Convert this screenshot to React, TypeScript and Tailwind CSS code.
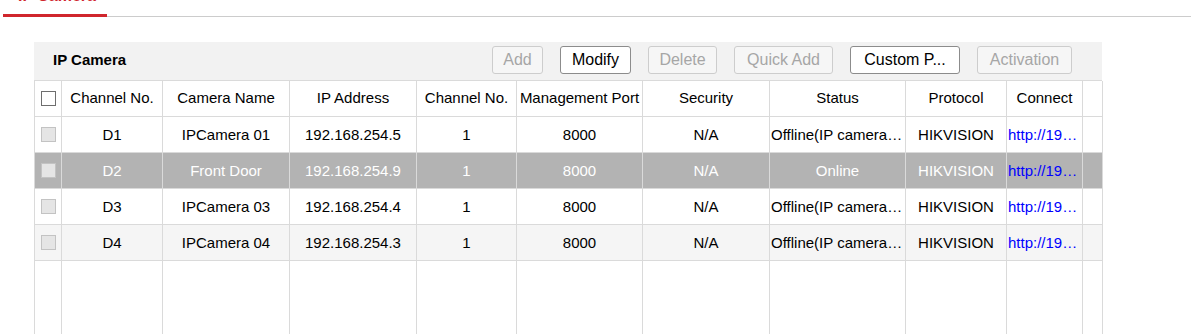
import { clsx } from 'clsx';

interface Camera {
    channel: string;
    name: string;
    ip: string;
    channelNo: string;
    port: string;
    security: string;
    status: string;
    protocol: string;
    connect: string;
}

const cameras: Camera[] = [
    { channel: 'D1', name: 'IPCamera 01', ip: '192.168.254.5', channelNo: '1', port: '8000', security: 'N/A', status: 'Offline(IP camera exception)', protocol: 'HIKVISION', connect: 'http://192.168.254.5' },
    { channel: 'D2', name: 'Front Door', ip: '192.168.254.9', channelNo: '1', port: '8000', security: 'N/A', status: 'Online', protocol: 'HIKVISION', connect: 'http://192.168.254.9' },
    { channel: 'D3', name: 'IPCamera 03', ip: '192.168.254.4', channelNo: '1', port: '8000', security: 'N/A', status: 'Offline(IP camera exception)', protocol: 'HIKVISION', connect: 'http://192.168.254.4' },
    { channel: 'D4', name: 'IPCamera 04', ip: '192.168.254.3', channelNo: '1', port: '8000', security: 'N/A', status: 'Offline(IP camera exception)', protocol: 'HIKVISION', connect: 'http://192.168.254.3' },
];

const buttons = [
    { label: 'Add', width: 'w-[51px]', enabled: false },
    { label: 'Modify', width: 'w-[71px]', enabled: true },
    { label: 'Delete', width: 'w-[69px]', enabled: false },
    { label: 'Quick Add', width: 'w-[99px]', enabled: false },
    { label: 'Custom P...', width: 'w-[110px]', enabled: true },
    { label: 'Activation', width: 'w-[95px]', enabled: false },
];

const headers = ['Channel No.', 'Camera Name', 'IP Address', 'Channel No.', 'Management Port', 'Security', 'Status', 'Protocol', 'Connect'];

// column widths include the right border line
const gridCols = 'grid grid-cols-[27px_101px_127px_127px_100px_126px_127px_136px_101px_76px_20px]';
const cell = 'h-[36px] border-r border-b border-[#dadada] flex items-center justify-center px-px min-w-0 overflow-hidden';
const text = 'block w-full text-center truncate';

export default function App() {
    return (
        <div className="w-[1191px] h-[334px] overflow-hidden bg-white text-[15px] text-black font-['Liberation_Sans',Arial,sans-serif]">
            {/* Tab bar */}
            <div className="ml-[3px] h-[17px] flex border-b border-[#cccccc]">
                <div className="w-[104px] h-[17px] border-b-[3px] border-[#d0262d] pl-[15px]">
                    <div className="-mt-[12px] leading-4 text-[16px] font-bold text-[#d0262d]">IP Camera</div>
                </div>
            </div>

            {/* Panel */}
            <div className="ml-[34px] mt-[25px] w-[1068px]">
                <div className="h-[38px] bg-[#f2f2f2] flex items-center pb-[2px] pl-[19px] pr-[30px]">
                    <span className="font-bold">IP Camera</span>
                    <div className="ml-auto flex gap-[17px]">
                        {buttons.map(b => (
                            <button
                                key={b.label}
                                className={clsx(
                                    'h-[28px] rounded-[3px] border text-center text-[16px] leading-none',
                                    b.width,
                                    b.enabled ? 'border-[#8c8c8c] bg-white text-black' : 'border-[#cdcdcd] bg-[#f6f6f6] text-[#a6a6a6]'
                                )}
                            >
                                {b.label}
                            </button>
                        ))}
                    </div>
                </div>

                <div className="border-l border-t border-[#dadada]">
                    {/* Header row */}
                    <div className={gridCols}>
                        <div className={cell}>
                            <span className="w-[15px] h-[15px] border border-[#6e6e6e] bg-white" />
                        </div>
                        {headers.map((h, i) => (
                            <div key={i} className={cell}>
                                <span className={text}>{h}</span>
                            </div>
                        ))}
                        <div className={cell} />
                    </div>

                    {/* Rows */}
                    {cameras.map((cam, i) => {
                        const selected = i === 1;
                        const values = [cam.channel, cam.name, cam.ip, cam.channelNo, cam.port, cam.security, cam.status, cam.protocol];
                        return (
                            <div
                                key={cam.channel}
                                className={clsx(
                                    gridCols,
                                    selected ? 'bg-[#b3b3b3] text-white' : i === 3 ? 'bg-[#f5f5f5]' : 'bg-white'
                                )}
                            >
                                <div className={cell}>
                                    <span className="w-[15px] h-[15px] border border-[#c3c3c3] bg-[#e5e5e5]" />
                                </div>
                                {values.map((v, j) => (
                                    <div key={j} className={clsx(cell, 'pt-px')}>
                                        <span className={text}>{v}</span>
                                    </div>
                                ))}
                                <div className={clsx(cell, 'pt-px')}>
                                    <span className="block w-full truncate text-left text-[#0000ff]">{cam.connect}</span>
                                </div>
                                <div className={cell} />
                            </div>
                        );
                    })}

                    {/* Empty space below rows */}
                    <div className={gridCols}>
                        {Array.from({ length: 11 }).map((_, i) => (
                            <div key={i} className="h-[120px] border-r border-[#dadada]" />
                        ))}
                    </div>
                </div>
            </div>
        </div>
    );
}
